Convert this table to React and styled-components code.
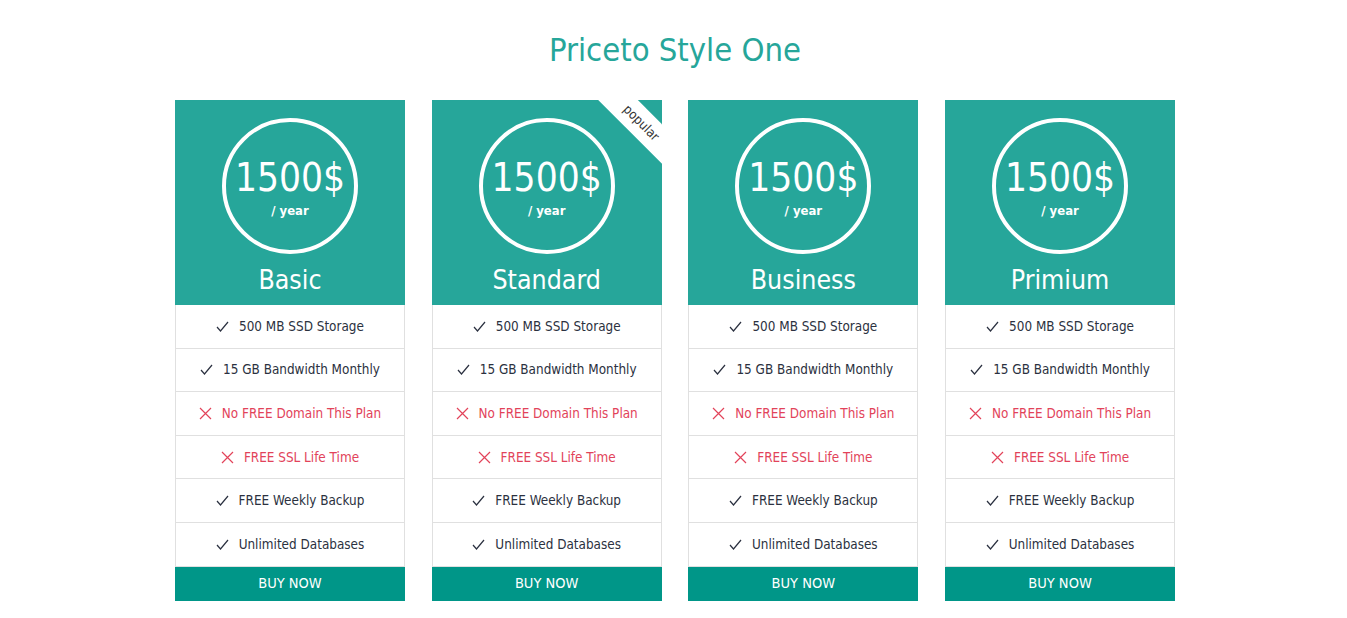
import React from 'react';
import styled, { createGlobalStyle } from 'styled-components';

const GlobalStyle = createGlobalStyle`
  html, body {
    margin: 0;
    padding: 0;
    background: #fff;
  }
  body {
    font-family: "DejaVu Sans Condensed", "DejaVu Sans", sans-serif;
    font-stretch: condensed;
  }
`;

const Page = styled.div`
  width: 100%;
  padding: 28px 0 0 3px;
  box-sizing: border-box;
`;

const Title = styled.h1`
  margin: 0 0 28px;
  text-align: center;
  font-weight: 400;
  font-size: 32.5px;
  line-height: 44px;
  color: #26a69a;
`;

const Grid = styled.div`
  display: grid;
  grid-template-columns: repeat(4, 230px);
  gap: 26.7px;
  justify-content: center;
`;

const Card = styled.div`
  display: flex;
  flex-direction: column;
`;

const Header = styled.div`
  position: relative;
  overflow: hidden;
  height: 205px;
  background: #26a69a;
  display: flex;
  flex-direction: column;
  align-items: center;
  padding-top: 18px;
  box-sizing: border-box;
  color: #fff;
`;

const Circle = styled.div`
  width: 136px;
  height: 136px;
  border: 4px solid #fff;
  border-radius: 50%;
  box-sizing: border-box;
  display: flex;
  flex-direction: column;
  align-items: center;
  justify-content: center;
`;

const Price = styled.div`
  font-size: 38.5px;
  line-height: 44px;
  margin-top: 4px;
`;

const Period = styled.div`
  font-size: 13px;
  font-weight: 700;
  line-height: 18px;
  margin-top: 2px;
`;

const PlanName = styled.div`
  font-size: 26.5px;
  line-height: 34px;
  margin-top: 9px;
`;

const Ribbon = styled.div`
  position: absolute;
  top: 9px;
  right: -54px;
  width: 150px;
  height: 28px;
  background: #fff;
  color: #333;
  transform: rotate(45deg);
  font-size: 13px;
  line-height: 28px;
  text-align: center;
`;

const Features = styled.ul`
  list-style: none;
  margin: 0;
  padding: 0;
  border-left: 1px solid #e0e0e0;
  border-right: 1px solid #e0e0e0;
`;

const Feature = styled.li`
  height: 43.6px;
  box-sizing: border-box;
  border-bottom: 1px solid #e0e0e0;
  display: flex;
  align-items: center;
  justify-content: center;
  gap: 10px;
  font-size: 13.4px;
  color: ${p => (p.$off ? '#e2435a' : '#2b3140')};
`;

const BuyButton = styled.button`
  height: 34px;
  border: 0;
  background: #009688;
  color: #fff;
  font-family: inherit;
  font-stretch: condensed;
  font-size: 14.5px;
  line-height: 32px;
  cursor: pointer;
  padding: 0 0 2px;
`;

const Check = () => (
  <svg width="13" height="11" viewBox="0 0 13 11">
    <path d="M1 6 L4.5 10 L12 1" fill="none" stroke="#2b3140" strokeWidth="1.2" />
  </svg>
);

const Cross = () => (
  <svg width="13" height="13" viewBox="0 0 13 13">
    <path d="M1 1 L12 12 M12 1 L1 12" fill="none" stroke="#e2435a" strokeWidth="1.2" />
  </svg>
);

const features = [
  { text: '500 MB SSD Storage' },
  { text: '15 GB Bandwidth Monthly' },
  { text: 'No FREE Domain This Plan', off: true },
  { text: 'FREE SSL Life Time', off: true },
  { text: 'FREE Weekly Backup' },
  { text: 'Unlimited Databases' },
];

const plans = [
  { name: 'Basic' },
  { name: 'Standard', popular: true },
  { name: 'Business' },
  { name: 'Primium' },
];

const App = () => (
  <Page>
    <GlobalStyle />
    <Title>Priceto Style One</Title>
    <Grid>
      {plans.map(plan => (
        <Card key={plan.name}>
          <Header>
            {plan.popular && <Ribbon>popular</Ribbon>}
            <Circle>
              <Price>1500$</Price>
              <Period>/ year</Period>
            </Circle>
            <PlanName>{plan.name}</PlanName>
          </Header>
          <Features>
            {features.map(f => (
              <Feature key={f.text} $off={f.off}>
                {f.off ? <Cross /> : <Check />}
                <span>{f.text}</span>
              </Feature>
            ))}
          </Features>
          <BuyButton>BUY NOW</BuyButton>
        </Card>
      ))}
    </Grid>
  </Page>
);

export default App;
